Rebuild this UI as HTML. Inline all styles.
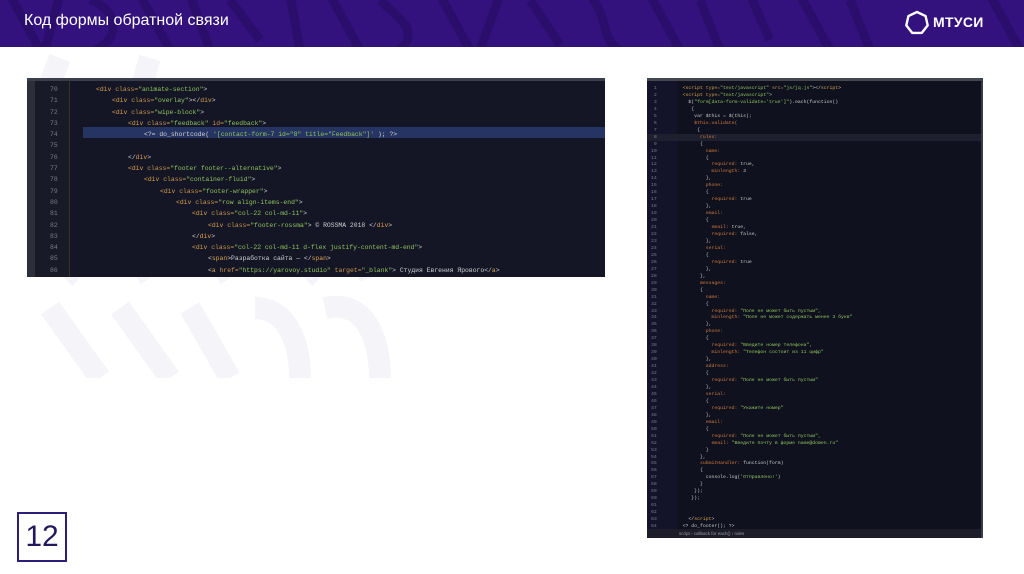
<!DOCTYPE html>
<html><head><meta charset="utf-8"><style>
*{margin:0;padding:0;box-sizing:border-box}
body{width:1024px;height:574px;position:relative;background:#fff;overflow:hidden;font-family:"Liberation Sans",sans-serif}
.hdr{position:absolute;left:0;top:0;width:1024px;height:47px;background:#33127d;overflow:hidden}
.hdr svg{position:absolute;left:0;top:0}
.title{position:absolute;left:24px;top:12px;color:#fff;font-size:16px}
.logo{position:absolute;left:933px;top:14px;color:#fff;font-size:14px;font-weight:bold;letter-spacing:0.3px}
.p1{position:absolute;left:27px;top:78px;width:578px;height:199px;background:#141626;overflow:hidden;border-top:3px solid #3a3d4a}
.p1 .g{position:absolute;left:0;top:0;width:8px;height:100%;background:#2d2f38}
.p1 .gut{position:absolute;left:8px;top:0;width:35px;height:100%;background:#181a28;border-right:1px solid #3a3320}
.code{position:absolute;font-family:"Liberation Mono",monospace;white-space:pre;color:#c8c8c8}
.p1 .code{left:0;top:3px;font-size:6.4px;line-height:11.3px}
.ln{color:#7a7d88;display:inline-block;text-align:left}
.t{color:#d9a04a}.a{color:#c9954a}.s{color:#8fc45a}.k{color:#cf7a3a}.w{color:#d0d0d0}
.hl{position:absolute;left:56px;top:46px;width:522px;height:11px;background:#253463}
.p2{position:absolute;left:647px;top:78px;width:336px;height:460px;background:#10111f;overflow:hidden;border-top:3px solid #45474f;border-right:2px solid #3a3c44}
.p2 .gut{position:absolute;left:0;top:0;width:30px;height:100%;background:#13142a}
.p2 .code{left:4px;top:5px;font-size:4.8px;line-height:6.95px}
.p2 .bar{position:absolute;left:0;bottom:0;width:100%;height:9px;background:#1c1d28;color:#9a9ca8;font-size:4.5px;padding:2px 0 0 32px}
.hl2{position:absolute;left:0;top:53px;width:100%;height:7px;background:#1e2030}
.num{position:absolute;left:17px;top:512px;width:50px;height:50px;border:2px solid #2b1f78;color:#23185c;font-size:30px;text-align:center;line-height:46px}
.bg{position:absolute;left:40px;top:48px}
</style></head><body>
<svg class="bg" width="360" height="330" viewBox="0 0 360 330">
<g fill="none" stroke="#f5f4f9" stroke-width="22" stroke-linecap="butt">
<path d="M10 260 L60 330"/><path d="M80 260 L130 330"/><path d="M150 260 L190 330"/><path d="M215 260 C250 260 260 300 260 330"/><path d="M285 260 C330 250 340 300 340 330"/>
<path d="M10 200 L40 230"/><path d="M90 200 L110 230"/><path d="M170 200 L190 230"/><path d="M250 200 L280 230"/><path d="M320 200 L330 230"/>
<path d="M20 10 L0 60"/><path d="M110 10 L95 60"/>
</g></svg>
<div class="hdr">
<svg width="1024" height="47"><g fill="none" stroke="#2b0e6c" stroke-width="9">
<path d="M10 -5 L40 50 M60 -5 L45 50 M90 0 C120 10 120 40 95 50 M140 -5 L170 50 M190 -5 L210 50 M230 0 L260 40 M290 -5 L300 50 M330 -5 L360 50 M380 0 C400 20 420 30 400 50 M440 -5 L470 50 M500 -5 L480 50 M530 0 L560 45 M590 -5 C610 20 600 40 620 50 M650 -5 L680 50 M700 0 L720 50 M750 -5 L770 40 M800 -5 L830 50 M850 0 L870 50 M990 -5 L1020 50"/>
</g></svg>
<div class="title">Код формы обратной связи</div>
<svg style="position:absolute;left:904px;top:10px" width="26" height="26" viewBox="0 0 26 26"><polygon points="13,2 21.6,6.1 23.7,15.4 17.8,22.9 8.2,22.9 2.3,15.4 4.4,6.1" fill="none" stroke="#fff" stroke-width="2.4" stroke-linejoin="round"/></svg>
<div class="logo">МТУСИ</div>
</div>

<div class="p1"><div class="g"></div><div class="gut"></div><div class="hl"></div>
<div class="code"><span class="ln" style="width:69px">      70</span><span class="t">&lt;div</span> <span class="a">class=</span><span class="s">"animate-section"</span>&gt;
<span class="ln" style="width:85px">      71</span><span class="t">&lt;div</span> <span class="a">class=</span><span class="s">"overlay"</span>&gt;&lt;/<span class="t">div</span>&gt;
<span class="ln" style="width:85px">      72</span><span class="t">&lt;div</span> <span class="a">class=</span><span class="s">"wipe-block"</span>&gt;
<span class="ln" style="width:101px">      73</span><span class="t">&lt;div</span> <span class="a">class=</span><span class="s">"feedback"</span> <span class="a">id=</span><span class="s">"feedback"</span>&gt;
<span class="ln" style="width:117px">      74 </span><span class="w">&lt;?= do_shortcode( </span><span class="s">'[contact-form-7 id="8" title="Feedback"]'</span><span class="w"> ); ?&gt;</span>
<span class="ln">      75</span>
<span class="ln" style="width:101px">      76</span>&lt;/<span class="t">div</span>&gt;
<span class="ln" style="width:101px">      77</span><span class="t">&lt;div</span> <span class="a">class=</span><span class="s">"footer footer--alternative"</span>&gt;
<span class="ln" style="width:117px">      78</span><span class="t">&lt;div</span> <span class="a">class=</span><span class="s">"container-fluid"</span>&gt;
<span class="ln" style="width:133px">      79</span><span class="t">&lt;div</span> <span class="a">class=</span><span class="s">"footer-wrapper"</span>&gt;
<span class="ln" style="width:149px">      80</span><span class="t">&lt;div</span> <span class="a">class=</span><span class="s">"row align-items-end"</span>&gt;
<span class="ln" style="width:165px">      81</span><span class="t">&lt;div</span> <span class="a">class=</span><span class="s">"col-22 col-md-11"</span>&gt;
<span class="ln" style="width:181px">      82</span><span class="t">&lt;div</span> <span class="a">class=</span><span class="s">"footer-rossma"</span>&gt; <span class="w">© ROSSMA 2018</span> &lt;/<span class="t">div</span>&gt;
<span class="ln" style="width:165px">      83</span>&lt;/<span class="t">div</span>&gt;
<span class="ln" style="width:165px">      84</span><span class="t">&lt;div</span> <span class="a">class=</span><span class="s">"col-22 col-md-11 d-flex justify-content-md-end"</span>&gt;
<span class="ln" style="width:181px">      85</span>&lt;<span class="t">span</span>&gt;<span class="w">Разработка сайта — </span>&lt;/<span class="t">span</span>&gt;
<span class="ln" style="width:181px">      86</span>&lt;<span class="t">a</span> <span class="a">href=</span><span class="s">"https://yarovoy.studio"</span> <span class="a">target=</span><span class="s">"_blank"</span>&gt; <span class="w">Студия Евгения Ярового</span>&lt;/<span class="t">a</span>&gt;</div>
</div>

<div class="p2"><div class="gut"></div><div class="hl2"></div>
<div class="code"><span class="ln"> 1         </span><span class="t">&lt;script</span> <span class="a">type=</span><span class="s">"text/javascript"</span> <span class="a">src=</span><span class="s">"js/jq.js"</span>&gt;&lt;/<span class="t">script</span>&gt;
<span class="ln"> 2         </span><span class="t">&lt;script</span> <span class="a">type=</span><span class="s">"text/javascript"</span>&gt;
<span class="ln"> 3         </span>  $(<span class="s">"form[data-form-validate='true']"</span>).each(function()
<span class="ln"> 4         </span>   {
<span class="ln"> 5         </span>    var $this = $(this);
<span class="ln"> 6         </span>    <span class="k">$this.validate(</span>
<span class="ln"> 7         </span>     {
<span class="ln"> 8         </span>      <span class="k">rules:</span>
<span class="ln"> 9         </span>      {
<span class="ln">10         </span>        <span class="k">name:</span>
<span class="ln">11         </span>        {
<span class="ln">12         </span>          <span class="k">required:</span> true,
<span class="ln">13         </span>          <span class="k">minlength:</span> 3
<span class="ln">14         </span>        },
<span class="ln">15         </span>        <span class="k">phone:</span>
<span class="ln">16         </span>        {
<span class="ln">17         </span>          <span class="k">required:</span> true
<span class="ln">18         </span>        },
<span class="ln">19         </span>        <span class="k">email:</span>
<span class="ln">20         </span>        {
<span class="ln">21         </span>          <span class="k">email:</span> true,
<span class="ln">22         </span>          <span class="k">required:</span> false,
<span class="ln">23         </span>        },
<span class="ln">24         </span>        <span class="k">serial:</span>
<span class="ln">25         </span>        {
<span class="ln">26         </span>          <span class="k">required:</span> true
<span class="ln">27         </span>        },
<span class="ln">28         </span>      },
<span class="ln">29         </span>      <span class="k">messages:</span>
<span class="ln">30         </span>      {
<span class="ln">31         </span>        <span class="k">name:</span>
<span class="ln">32         </span>        {
<span class="ln">33         </span>          <span class="k">required:</span> <span class="s">"Поле не может быть пустым",</span>
<span class="ln">34         </span>          <span class="k">minlength:</span> <span class="s">"Поле не может содержать менее 3 букв"</span>
<span class="ln">35         </span>        },
<span class="ln">36         </span>        <span class="k">phone:</span>
<span class="ln">37         </span>        {
<span class="ln">38         </span>          <span class="k">required:</span> <span class="s">"Введите номер телефона",</span>
<span class="ln">39         </span>          <span class="k">minlength:</span> <span class="s">"Телефон состоит из 11 цифр"</span>
<span class="ln">40         </span>        },
<span class="ln">41         </span>        <span class="k">address:</span>
<span class="ln">42         </span>        {
<span class="ln">43         </span>          <span class="k">required:</span> <span class="s">"Поле не может быть пустым"</span>
<span class="ln">44         </span>        },
<span class="ln">45         </span>        <span class="k">serial:</span>
<span class="ln">46         </span>        {
<span class="ln">47         </span>          <span class="k">required:</span> <span class="s">"Укажите номер"</span>
<span class="ln">48         </span>        },
<span class="ln">49         </span>        <span class="k">email:</span>
<span class="ln">50         </span>        {
<span class="ln">51         </span>          <span class="k">required:</span> <span class="s">"Поле не может быть пустым",</span>
<span class="ln">52         </span>          <span class="k">email:</span> <span class="s">"Введите почту в форме name@domen.ru"</span>
<span class="ln">53         </span>        }
<span class="ln">54         </span>      },
<span class="ln">55         </span>      <span class="k">submitHandler:</span> function(form)
<span class="ln">56         </span>      {
<span class="ln">57         </span>        console.log(<span class="s">'Отправлено!'</span>)
<span class="ln">58         </span>      }
<span class="ln">59         </span>    });
<span class="ln">60         </span>   });
<span class="ln">61         </span>
<span class="ln">62         </span>
<span class="ln">63         </span>  &lt;/<span class="t">script</span>&gt;
<span class="ln">64         </span>&lt;? do_footer(); ?&gt;</div>
<div class="bar">script  ›  callback for each()  ›  rules</div>
</div>

<div class="num">12</div>
</body></html>
